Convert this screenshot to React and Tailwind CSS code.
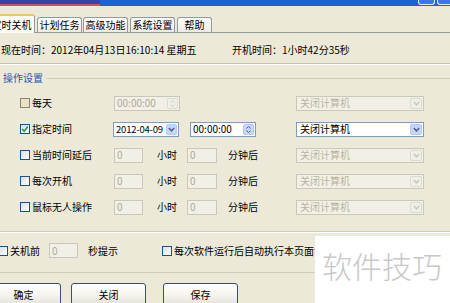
import React from "react";

function Check({ checked = false, dim = false }) {
  return (
    <span
      className={
        "w-[10px] h-[10px] border flex items-center justify-center shrink-0 " +
        (dim
          ? "border-[#8a8470] bg-[#e9e2c4]"
          : "border-[#1c5180] bg-gradient-to-br from-[#d8dde6] to-white")
      }
    >
      {checked && (
        <svg width="8" height="8" viewBox="0 0 8 8">
          <path d="M1.2 4 L3.2 6.2 L6.8 1.6" fill="none" stroke="#21a121" strokeWidth="1.6" />
        </svg>
      )}
    </span>
  );
}

function Chevron({ color }) {
  return (
    <svg width="7" height="5" viewBox="0 0 7 5">
      <path d="M0.8 1 L3.5 3.8 L6.2 1" fill="none" stroke={color} strokeWidth="1.5" />
    </svg>
  );
}

function Spin({ value, enabled }) {
  return (
    <div
      className={
        "w-[66px] h-[15px] border flex items-center justify-between pl-[2px] pr-[1px] whitespace-nowrap " +
        (enabled ? "border-[#7f9db9] bg-white text-black" : "border-[#c9c7ba] bg-[#f2f0e6] text-[#aca899]")
      }
    >
      <span className="text-[10px] leading-[12px]">{value}</span>
      <span
        className={
          "w-[11px] h-[11px] rounded-[2px] border flex flex-col items-center justify-center gap-[1px] shrink-0 " +
          (enabled ? "border-[#b6c8ef] bg-[#c7d6f6]" : "border-[#dcdad0] bg-[#f0efe8]")
        }
      >
        <svg width="5" height="3" viewBox="0 0 5 3">
          <path d="M0.5 2.5 L2.5 0.5 L4.5 2.5" fill="none" stroke={enabled ? "#4d6185" : "#c9c7ba"} strokeWidth="1" />
        </svg>
        <svg width="5" height="3" viewBox="0 0 5 3">
          <path d="M0.5 0.5 L2.5 2.5 L4.5 0.5" fill="none" stroke={enabled ? "#4d6185" : "#c9c7ba"} strokeWidth="1" />
        </svg>
      </span>
    </div>
  );
}

function DateBox() {
  return (
    <div className="w-[66px] h-[15px] border border-[#7f9db9] bg-white flex items-center justify-between pl-[2px] pr-[1px] whitespace-nowrap">
      <span className="text-[9.5px] tracking-[-0.2px]">2012-04-09</span>
      <span className="w-[11px] h-[11px] rounded-[2px] bg-[#c7d6f6] border border-[#b6c8ef] flex items-center justify-center shrink-0">
        <Chevron color="#4d6185" />
      </span>
    </div>
  );
}

function Combo({ enabled }) {
  return (
    <div
      className={
        "w-[128px] h-[15px] border flex items-center justify-between pl-[3px] pr-[1px] " +
        (enabled ? "border-[#7f9db9] bg-white text-black" : "border-[#c9c7ba] bg-[#f2f0e6] text-[#b8b4a2]")
      }
    >
      <span>关闭计算机</span>
      <span
        className={
          "w-[12px] h-[11px] rounded-[2px] border flex items-center justify-center " +
          (enabled ? "border-[#b6c8ef] bg-[#c7d6f6]" : "border-[#dcdad0] bg-[#f0efe8]")
        }
      >
        <Chevron color={enabled ? "#4d6185" : "#c9c7ba"} />
      </span>
    </div>
  );
}

function SmallInput({ w = "w-[29px]" }) {
  return (
    <div className={w + " h-[15px] border border-[#c9c7ba] bg-[#f2f0e6] text-[#aca899] flex items-center pl-[2px]"}>
      0
    </div>
  );
}

function Label({ checked, dim, text }) {
  return (
    <div className="w-[94px] flex items-center gap-[2px]">
      <Check checked={checked} dim={dim} />
      <span>{text}</span>
    </div>
  );
}

function DelayRow({ text }) {
  return (
    <div className="h-[26px] flex items-center pl-[20px]">
      <Label text={text} />
      <div className="w-[182px] flex items-center">
        <SmallInput />
        <span className="ml-[14px]">小时</span>
        <div className="ml-[10px]">
          <SmallInput w="w-[30px]" />
        </div>
        <span className="ml-[11px]">分钟后</span>
      </div>
      <Combo enabled={false} />
    </div>
  );
}

function Btn({ text, cls }) {
  return (
    <div
      className={
        "w-[75px] h-[23px] shrink-0 rounded-[3px] border border-[#3c4f6a] bg-gradient-to-b from-white via-[#f6f5f0] to-[#e3e1d6] flex items-center justify-center " +
        cls
      }
    >
      {text}
    </div>
  );
}

export default function App() {
  return (
    <div className="w-[450px] h-[303px] overflow-hidden relative bg-[#ece9d8] text-[10px] leading-[12px] text-black font-['Noto_Sans_CJK_SC',sans-serif]">
      {/* title bar */}
      <div className="h-[6px] flex bg-[#1f5fd8]">
        <div className="w-[100px] bg-[#3542a8] border-b-2 border-[#d24c70]" />
        <div className="flex-1" />
        <div className="w-[17px] h-[5px] border border-t-0 border-[#e6eefc] rounded-b-[3px] bg-[#3a78e8]" />
        <div className="w-[2px]" />
        <div className="w-[13px] h-[5px] border border-t-0 border-r-0 border-[#e6eefc] rounded-bl-[3px] bg-[#3a78e8]" />
      </div>

      {/* tabs */}
      <div className="h-[27px] flex items-end border-b border-[#919b9c]">
        <div className="-ml-[12px] w-[47px] h-[19px] -mb-px relative z-10 border border-b-0 border-[#919b9c] border-t-2 border-t-[#f6c35a] rounded-t-[3px] bg-[#fbfbf8] flex items-center justify-center shrink-0">
          定时关机
        </div>
        <div className="ml-[2px] w-[45px] h-[15px] border border-b-0 border-[#919b9c] rounded-t-[3px] bg-gradient-to-b from-white to-[#ecebe4] flex items-center justify-center shrink-0">
          计划任务
        </div>
        <div className="ml-[1px] w-[45px] h-[15px] border border-b-0 border-[#919b9c] rounded-t-[3px] bg-gradient-to-b from-white to-[#ecebe4] flex items-center justify-center shrink-0">
          高级功能
        </div>
        <div className="ml-[2px] w-[45px] h-[15px] border border-b-0 border-[#919b9c] rounded-t-[3px] bg-gradient-to-b from-white to-[#ecebe4] flex items-center justify-center shrink-0">
          系统设置
        </div>
        <div className="ml-[2px] w-[35px] h-[15px] border border-b-0 border-[#919b9c] rounded-t-[3px] bg-gradient-to-b from-white to-[#ecebe4] flex items-center justify-center shrink-0">
          帮助
        </div>
      </div>

      {/* info */}
      <div className="h-[31px] pt-[4px] flex items-center border-b border-[#c5c2b2]">
        <span className="pl-[1px] w-[232px]">现在时间：2012年04月13日16:10:14 星期五</span>
        <span>开机时间：1小时42分35秒</span>
      </div>
      <div className="h-px bg-white" />

      {/* group header */}
      <div className="mt-[7px] h-[12px] flex items-center">
        <span className="pl-[3px] text-[#2b56a6]">操作设置</span>
        <div className="flex-1 ml-[3px] h-px bg-[#d0cdbb]" />
      </div>

      {/* rows */}
      <div className="mt-[6px] flex flex-col">
        <div className="h-[26px] flex items-center pl-[20px]">
          <Label text="每天" dim />
          <div className="w-[182px] flex items-center">
            <Spin value="00:00:00" enabled={false} />
          </div>
          <Combo enabled={false} />
        </div>
        <div className="h-[26px] flex items-center pl-[20px]">
          <Label text="指定时间" checked />
          <div className="w-[182px] flex items-center -ml-px">
            <DateBox />
            <div className="ml-[11px]">
              <Spin value="00:00:00" enabled />
            </div>
          </div>
          <div className="ml-px">
            <Combo enabled />
          </div>
        </div>
        <DelayRow text="当前时间延后" />
        <DelayRow text="每次开机" />
        <DelayRow text="鼠标无人操作" />
      </div>

      <div className="mt-[11px] h-px bg-[#d0cdbb]" />
      <div className="h-px bg-white" />

      {/* prompt row */}
      <div className="h-[40px] pb-[4px] flex items-center border-b border-[#d0cdbb]">
        <div className="-ml-[2px] flex items-center gap-[2px]">
          <Check />
          <span>关机前</span>
        </div>
        <div className="ml-[9px]">
          <SmallInput />
        </div>
        <span className="ml-[10px]">秒提示</span>
        <div className="ml-[44px] flex items-center gap-[2px] whitespace-nowrap">
          <Check />
          <span>每次软件运行后自动执行本页面设置</span>
        </div>
      </div>

      {/* buttons */}
      <div className="mt-[10px] flex">
        <Btn text="确定" cls="-ml-[14px]" />
        <Btn text="关闭" cls="ml-[10px]" />
        <Btn text="保存" cls="ml-[17px]" />
      </div>

      {/* watermark */}
      <div className="absolute left-[315px] top-[236px] right-0 bottom-0 bg-white pl-[7px] pt-[14px]">
        <span className="text-[30px] leading-[30px] text-[#c8c8c8] font-light">软件技巧</span>
      </div>
    </div>
  );
}
